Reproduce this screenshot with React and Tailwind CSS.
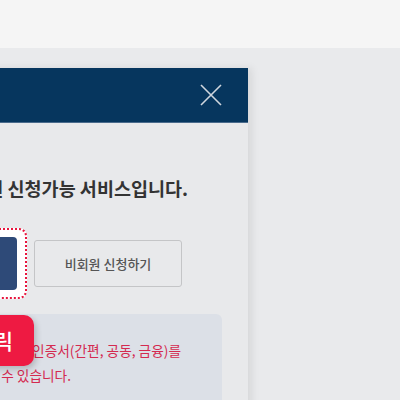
const font = { fontFamily: '"Noto Sans CJK KR", "Noto Sans", sans-serif' };

function App() {
  return (
    <div className="min-h-[400px] w-[400px] overflow-hidden bg-[#e9eaec]" style={font}>
      <div className="h-12 bg-[#f5f5f5]" />

      <div className="mt-5 ml-[-252px] w-[500px] bg-[#e8e9eb] shadow-[4px_0_8px_rgba(0,0,0,0.08)]">
        <div className="flex h-[55px] items-center justify-end border-b border-[#4a6b8c] bg-[#06365e] pr-[26px]">
          <svg width="22" height="22" viewBox="0 0 22 22" className="text-[#cfd6de]">
            <path d="M1 1L21 21M21 1L1 21" stroke="currentColor" strokeWidth="1.6" />
          </svg>
        </div>

        <div className="pt-[52px] pb-10">
          <h2 className="whitespace-nowrap pr-[60px] text-right text-[18.5px] font-bold leading-[26px] text-[#333]">
            회원 및 비회원 신청가능 서비스입니다.
          </h2>

          <div className="mt-[27px] flex items-center justify-end gap-[7px] pr-[66px]">
            <div className="rounded-[8px] border-2 border-dotted border-[#e8153e] bg-white px-2 py-[7px]">
              <button className="h-[53px] w-[148px] rounded-[4px] bg-[#2e4a78] text-[13px] text-white">
                회원 신청하기
              </button>
            </div>
            <button className="h-[47px] w-[148px] rounded-[3px] border border-[#c4c5c7] text-[13px] font-medium text-[#555]">
              비회원 신청하기
            </button>
          </div>

          <div className="relative mt-[15px] mr-[26px] ml-[60px] rounded-md bg-[#dce0e7] pt-6 pb-6 text-[13.7px] leading-[25px] text-[#d42a50]">
            <p className="whitespace-nowrap pr-[41px] text-right">
              휴대폰 본인인증 또는 인증서(간편, 공동, 금융)를
            </p>
            <p className="whitespace-nowrap pr-[151px] text-right">
              이용하여 신청할 수 있습니다.
            </p>

            <div className="absolute top-px right-[188px] flex h-[51px] items-center rounded-[10px] bg-[#ee1a42] px-[21px] text-[21px] font-medium text-white shadow-[2px_3px_6px_rgba(0,0,0,0.2)]">
              클릭
            </div>
          </div>
        </div>
      </div>
    </div>
  );
}

export default App;
